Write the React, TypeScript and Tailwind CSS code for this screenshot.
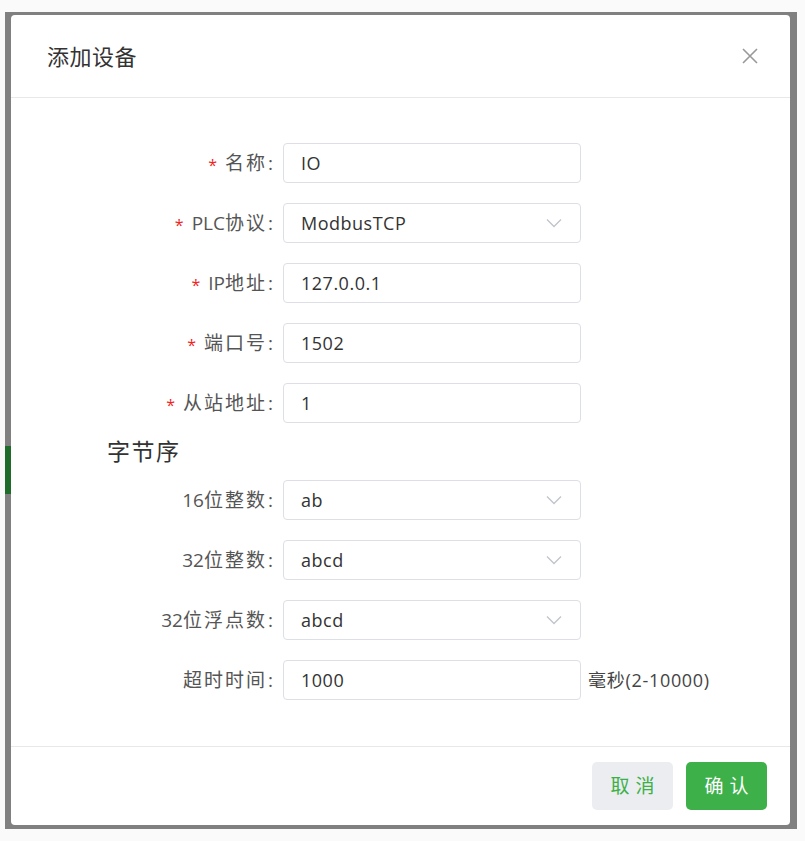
import React from "react";

const font = {
  fontFamily: '"Open Sans", "Noto Sans CJK SC", sans-serif',
};

interface FieldProps {
  label: string;
  value: string;
  required?: boolean;
  select?: boolean;
  suffix?: string;
}

const Chevron: React.FC = () => (
  <svg width="16" height="10" viewBox="0 0 16 10" fill="none">
    <path d="M1 1.5 L8 8.5 L15 1.5" stroke="#c0c4cc" strokeWidth="1.3" />
  </svg>
);

// CJK runs render a little wider than latin in the source, so only they get tracking
const Label: React.FC<{ text: string }> = ({ text }) => (
  <span>
    {text.split(/([\u4e00-\u9fff]+)/).map((part, i) =>
      /[\u4e00-\u9fff]/.test(part) ? (
        <span key={i} className="tracking-[2px]">{part}</span>
      ) : (
        <span key={i}>{part}</span>
      )
    )}
    <span className="ml-[1px] mr-[2px]">:</span>
  </span>
);

const Field: React.FC<FieldProps> = ({ label, value, required, select, suffix }) => (
  <div className="flex items-center h-[40px]">
    <div className="w-[264px] flex justify-end items-center text-[19px] text-[#555]">
      {required && <span className="text-[#f01f1f] text-[16px] mr-[8px] mt-[3px]">*</span>}
      <Label text={label} />
    </div>
    <div className="ml-[8px] w-[298px] h-[40px] rounded-[4px] border border-[#dcdfe6] flex items-center justify-between pl-[17px] pr-[18px] text-[18px] tracking-[0.5px] text-[#333]">
      <span>{value}</span>
      {select && <Chevron />}
    </div>
    {suffix && <span className="ml-[7px] text-[18px] tracking-[0.7px] text-[#444]">{suffix}</span>}
  </div>
);

export default function App() {
  return (
    <div className="w-[805px] h-[841px] bg-[#fafafa] pt-[12px] pl-[5px] pr-[8px]" style={font}>
      <div className="relative h-[817px] bg-[#808080] pt-[3px] pl-[6px] pr-[7px] pb-[4px]">
        <div className="absolute left-0 top-[434px] w-[6px] h-[48px] bg-[#1f6b2a]" />
        <div className="h-full bg-white rounded-[4px] flex flex-col">
          <div className="h-[83px] border-b border-[#e8e8e8] flex items-center justify-between pl-[36px] pr-[31px] shrink-0">
            <span className="text-[22px] tracking-[0.5px] text-[#333]">添加设备</span>
            <svg width="18" height="18" viewBox="0 0 18 18">
              <path d="M2 2 L16 16 M16 2 L2 16" stroke="#999" strokeWidth="1.6" />
            </svg>
          </div>
          <div className="flex-1 pt-[45px]">
            <div className="flex flex-col gap-[20px]">
              <Field label="名称" value="IO" required />
              <Field label="PLC协议" value="ModbusTCP" required select />
              <Field label="IP地址" value="127.0.0.1" required />
              <Field label="端口号" value="1502" required />
              <Field label="从站地址" value="1" required />
            </div>
            <div className="pl-[96px] h-[57px] flex items-center text-[23px] tracking-[1.5px] text-[#333]">字节序</div>
            <div className="flex flex-col gap-[20px]">
              <Field label="16位整数" value="ab" select />
              <Field label="32位整数" value="abcd" select />
              <Field label="32位浮点数" value="abcd" select />
              <Field label="超时时间" value="1000" suffix="毫秒(2-10000)" />
            </div>
          </div>
          <div className="h-[79px] border-t border-[#e8e8e8] flex items-start justify-end gap-[13px] pt-[15px] pr-[23px] shrink-0">
            <button className="w-[81px] h-[48px] rounded-[5px] bg-[#ebedf0] text-[#3db049] text-[19px] tracking-[6px] pl-[6px]">取消</button>
            <button className="w-[81px] h-[48px] rounded-[5px] bg-[#3db049] text-white text-[19px] tracking-[6px] pl-[6px]">确认</button>
          </div>
        </div>
      </div>
    </div>
  );
}
